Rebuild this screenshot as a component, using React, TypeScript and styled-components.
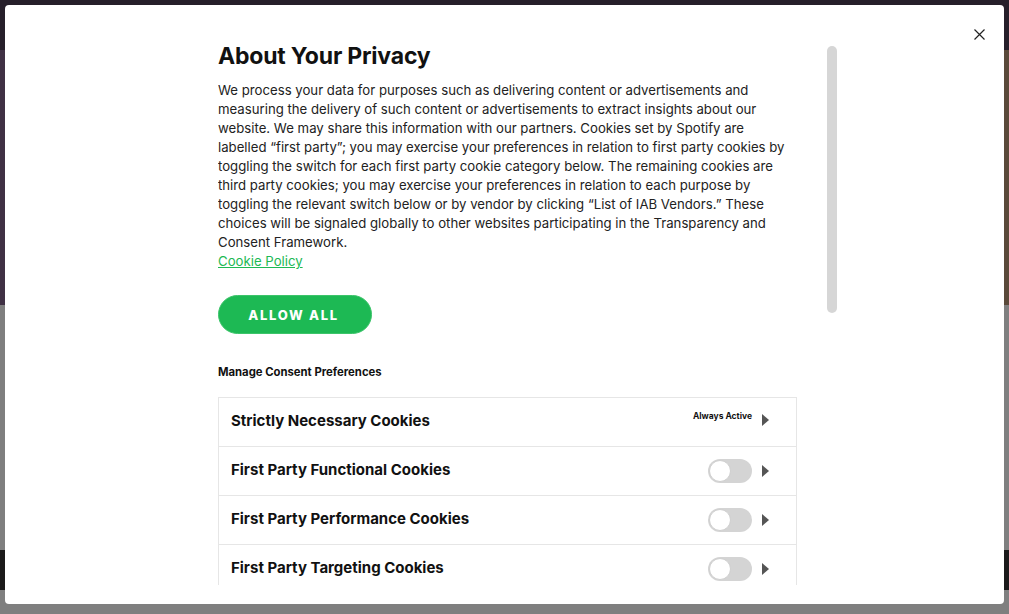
import React from "react";
import styled, { createGlobalStyle } from "styled-components";

const GlobalStyle = createGlobalStyle`
  html, body { margin: 0; padding: 0; }
  body {
    width: 1009px;
    height: 614px;
    overflow: hidden;
    background: #7f7f7f;
    font-family: "Inter", "Liberation Sans", Arial, sans-serif;
  }
  * { box-sizing: border-box; }
`;

/* ---------- dimmed page behind the dialog ---------- */
const Page = styled.div`
  width: 1009px;
  height: 614px;
  display: flex;
  flex-direction: column;
`;

const PageHeader = styled.header`
  height: 50px;
  background: #261f2a;
  display: flex;
  align-items: center;
  justify-content: space-between;
  padding: 0 12px;
  color: #8a8590;
  font-family: "Liberation Sans", Arial, sans-serif;
  font-weight: 700;
  font-size: 22px;
`;

const Hero = styled.section`
  height: 255px;
  background: linear-gradient(90deg, #3f3044 0%, #4a3b4d 50%, #5a4a3a 100%);
`;

const PageMain = styled.main`
  height: 245px;
  background: #7f7f7f;
`;

const PageFooter = styled.footer`
  height: 40px;
  background: #1b1a1a;
`;

const PageRest = styled.div`
  flex: 1;
  background: #7f7f7f;
`;

/* ---------- dialog ---------- */
const Dialog = styled.div`
  position: fixed;
  top: 5px;
  left: 5px;
  width: 999px;
  height: 599px;
  background: #ffffff;
  border-radius: 4px;
  padding: 20px 0 19px 213px;
  display: flex;
  color: #222222;
`;

const CloseButton = styled.button`
  position: absolute;
  top: 21px;
  right: 17px;
  width: 16px;
  height: 16px;
  border: none;
  background: transparent;
  padding: 0;
  display: flex;
  align-items: center;
  justify-content: center;
  cursor: pointer;
`;

const ScrollArea = styled.div`
  width: 579px;
  height: 100%;
  overflow: hidden;
  padding-top: 16px;
`;

const Scrollbar = styled.div`
  margin-left: 30px;
  margin-top: 21px;
  width: 10px;
  height: 267px;
  border-radius: 5px;
  background: #d6d6d6;
`;

const Title = styled.h2`
  margin: 0;
  font-size: 23px;
  line-height: 30px;
  font-weight: 700;
  color: #111111;
  letter-spacing: -0.2px;
`;

const Description = styled.p`
  margin: 10px 0 0;
  font-size: 13.2px;
  line-height: 19px;
  color: #222222;
  white-space: nowrap;
`;

const PolicyLink = styled.a`
  display: inline-block;
  color: #1db954;
  text-decoration: underline;
  font-size: 13.2px;
  line-height: 19px;
`;

const AllowButton = styled.button`
  margin-top: 24px;
  width: 154px;
  height: 39px;
  border-radius: 20px;
  border: 1px solid #3cc46a;
  background: #1db954;
  color: #ffffff;
  font-family: "Inter", "Liberation Sans", Arial, sans-serif;
  font-weight: 800;
  font-size: 13px;
  letter-spacing: 1.7px;
  padding-left: 3px;
  display: block;
  cursor: pointer;
`;

const SectionLabel = styled.h3`
  margin: 31px 0 0;
  font-size: 11.3px;
  line-height: 14px;
  font-weight: 700;
  color: #111111;
`;

const List = styled.div`
  margin-top: 18px;
  border: 1px solid #e6e6e6;
  border-bottom: none;
`;

const Row = styled.div`
  height: 49px;
  border-bottom: 1px solid #e6e6e6;
  display: flex;
  align-items: center;
  padding: 0 27px 0 12px;
`;

const RowTitle = styled.span`
  flex: 1;
  font-size: 15px;
  font-weight: 700;
  color: #111111;
  margin-top: -4px;
`;

const Controls = styled.div`
  display: flex;
  align-items: center;
  gap: 10px;
`;

const AlwaysActive = styled.span`
  font-size: 8.5px;
  font-weight: 700;
  color: #111111;
  margin-top: -12px;
`;

const Toggle = styled.span`
  width: 44px;
  height: 24px;
  border-radius: 12px;
  background: #d4d4d4;
  display: flex;
  align-items: center;
  padding-left: 1px;
`;

const Knob = styled.span`
  width: 22px;
  height: 22px;
  border-radius: 50%;
  background: #ffffff;
  border: 1px solid #cfcfcf;
`;

const Arrow = styled.span<{ $up?: boolean }>`
  width: 0;
  height: 0;
  border-top: 6px solid transparent;
  border-bottom: 6px solid transparent;
  border-left: 7px solid #555555;
  margin-top: ${(p) => (p.$up ? "-4px" : "0")};
`;

const paragraph = [
  "We process your data for purposes such as delivering content or advertisements and",
  "measuring the delivery of such content or advertisements to extract insights about our",
  "website. We may share this information with our partners. Cookies set by Spotify are",
  "labelled “first party”; you may exercise your preferences in relation to first party cookies by",
  "toggling the switch for each first party cookie category below. The remaining cookies are",
  "third party cookies; you may exercise your preferences in relation to each purpose by",
  "toggling the relevant switch below or by vendor by clicking “List of IAB Vendors.” These",
  "choices will be signaled globally to other websites participating in the Transparency and",
  "Consent Framework.",
];

const categories = [
  { name: "Strictly Necessary Cookies", always: true },
  { name: "First Party Functional Cookies" },
  { name: "First Party Performance Cookies" },
  { name: "First Party Targeting Cookies" },
];

export default function App() {
  return (
    <>
      <GlobalStyle />
      <Page>
        <PageHeader>
          <span>Spotify</span>
          <span>F</span>
        </PageHeader>
        <Hero />
        <PageMain />
        <PageFooter />
        <PageRest />
      </Page>
      <Dialog role="dialog" aria-label="About Your Privacy">
        <CloseButton aria-label="Close">
          <svg width="11" height="11" viewBox="0 0 11 11">
            <path d="M0.5 0.5 L10.5 10.5 M10.5 0.5 L0.5 10.5" stroke="#222" strokeWidth="1.2" fill="none" />
          </svg>
        </CloseButton>
        <ScrollArea>
          <Title>About Your Privacy</Title>
          <Description>
            {paragraph.map((line) => (
              <React.Fragment key={line}>
                {line}
                <br />
              </React.Fragment>
            ))}
            <PolicyLink href="#">Cookie Policy</PolicyLink>
          </Description>
          <AllowButton>ALLOW ALL</AllowButton>
          <SectionLabel>Manage Consent Preferences</SectionLabel>
          <List>
            {categories.map((c) => (
              <Row key={c.name}>
                <RowTitle>{c.name}</RowTitle>
                <Controls>
                  {c.always ? (
                    <AlwaysActive>Always Active</AlwaysActive>
                  ) : (
                    <Toggle>
                      <Knob />
                    </Toggle>
                  )}
                  <Arrow $up={c.always} />
                </Controls>
              </Row>
            ))}
          </List>
        </ScrollArea>
        <Scrollbar />
      </Dialog>
    </>
  );
}
